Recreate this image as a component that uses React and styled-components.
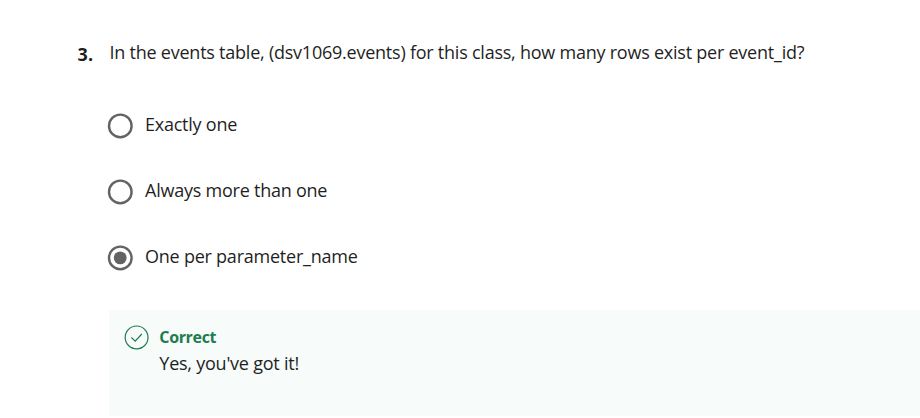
import React from "react";
import styled, { createGlobalStyle } from "styled-components";

const GlobalStyle = createGlobalStyle`
  * { box-sizing: border-box; }
  body {
    margin: 0;
    background: #fff;
    color: #1f1f1f;
    font: 18px/26px "Open Sans", sans-serif;
    letter-spacing: -0.235px;
    overflow: hidden;
  }
`;

const Page = styled.main`
  display: flex;
  flex-direction: column;
  height: 418px;
  padding-top: 39px;
`;

const Question = styled.header`
  display: flex;
  height: 53px;
  padding-left: 77.5px;
`;

const QuestionNumber = styled.span`
  flex: 0 0 32px;
  padding-top: 2px;
  font-weight: 700;
  letter-spacing: 0.3px;
`;

const Prompt = styled.h1`
  margin: 0;
  font-size: 18px;
  font-weight: 400;
  white-space: nowrap;
`;

const Options = styled.div`
  display: flex;
  flex-direction: column;
  padding-left: 107px;
`;

const Option = styled.label`
  display: flex;
  align-items: center;
  gap: 12px;
  height: 66px;
`;

const OptionText = styled.span`
  padding-bottom: 2px;
`;

const RadioIcon = styled.svg`
  flex: none;
  width: 26px;
  height: 26px;
  margin-top: 2px;
`;

const Feedback = styled.section`
  display: flex;
  gap: 10.3px;
  height: 106px;
  margin: 20px 0 0 109px;
  padding: 14px 15px;
  background: #f7fbf9;
`;

const Check = styled.svg`
  flex: none;
  width: 25px;
  height: 25px;
  margin-top: 1px;
`;

const Title = styled.div`
  font-weight: 700;
  font-size: 16px;
  letter-spacing: -0.35px;
  color: #1d7c50;
`;

const options = [
  { label: "Exactly one" },
  { label: "Always more than one" },
  { label: "One per parameter_name", checked: true },
];

function Radio({ checked }) {
  return (
    <RadioIcon viewBox="0 0 26 26">
      <circle cx="13.3" cy="12.9" r="11.3" fill="none" stroke="#636363" strokeWidth="2.4" />
      {checked && <circle cx="13.2" cy="12.9" r="6.4" fill="#636363" />}
    </RadioIcon>
  );
}

export default function App() {
  return (
    <Page>
      <GlobalStyle />
      <Question>
        <QuestionNumber>3.</QuestionNumber>
        <Prompt>In the events table, (dsv1069.events) for this class, how many rows exist per event_id?</Prompt>
      </Question>
      <Options>
        {options.map((o) => (
          <Option key={o.label}>
            <Radio checked={o.checked} />
            <OptionText>{o.label}</OptionText>
          </Option>
        ))}
      </Options>
      <Feedback>
        <Check viewBox="0 0 25 25" fill="none" stroke="#1d7c50" strokeWidth="1.2">
          <circle cx="12.6" cy="12.4" r="11.4" />
          <path d="M7.4 12.5l3.8 3.7 6.6-7.2" />
        </Check>
        <div>
          <Title>Correct</Title>
          <div>Yes, you've got it!</div>
        </div>
      </Feedback>
    </Page>
  );
}
